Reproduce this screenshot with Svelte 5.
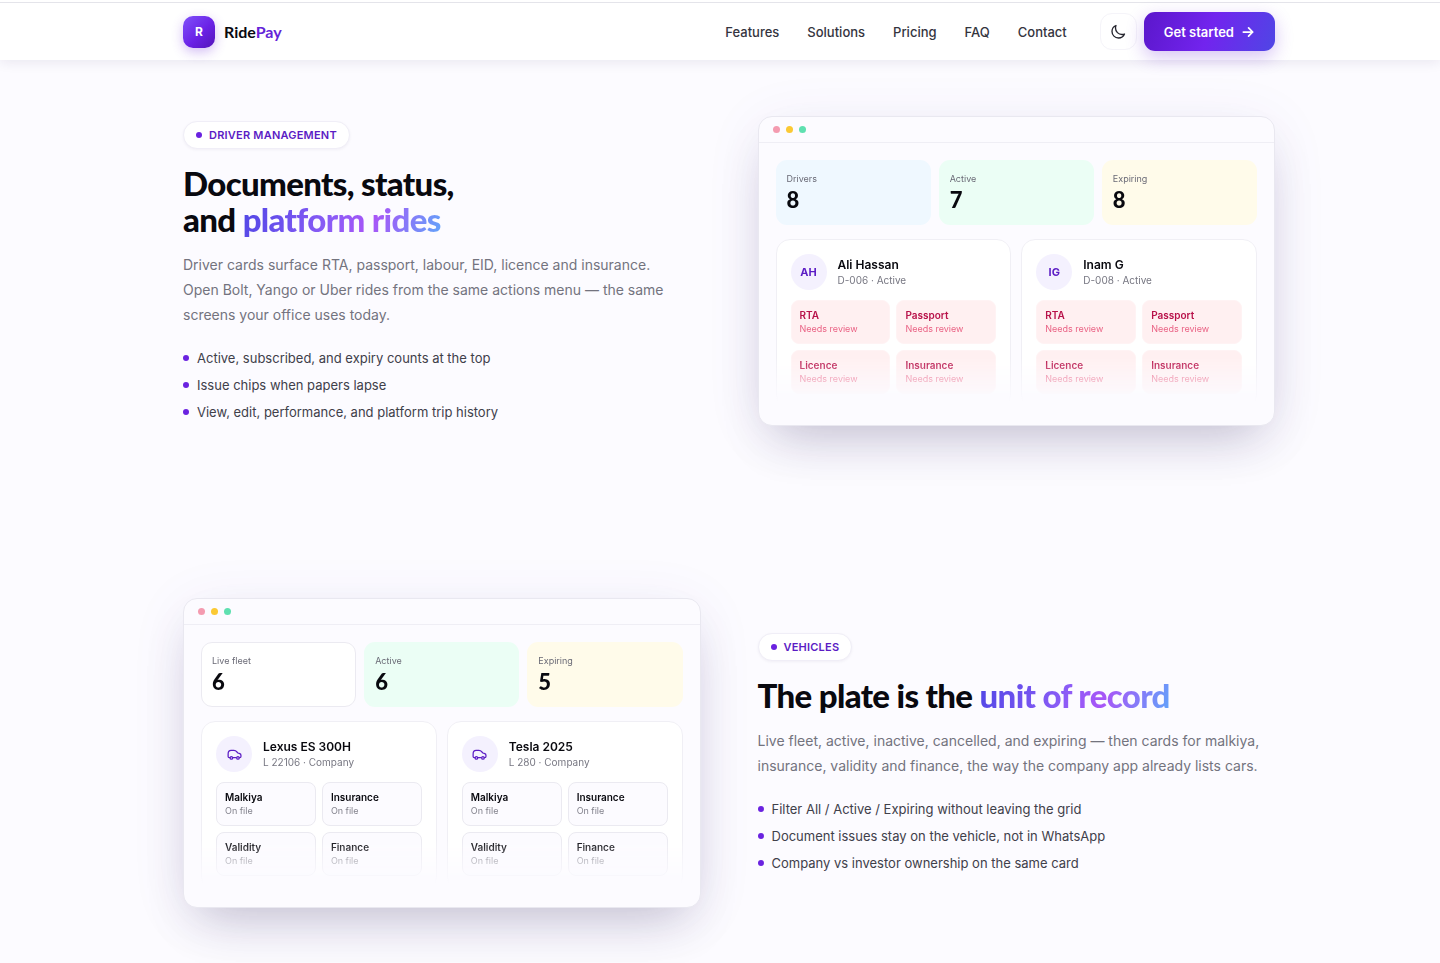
<script>
    const links = ["Features", "Solutions", "Pricing", "FAQ", "Contact"];

    const driverDocs = ["RTA", "Passport", "Licence", "Insurance"];
    const vehicleDocs = ["Malkiya", "Insurance", "Validity", "Finance"];

    const sections = [
        {
            id: "drivers",
            label: "Driver management",
            title: ["Documents, status,", "and "],
            accent: "platform rides",
            text: "Driver cards surface RTA, passport, labour, EID, licence and insurance. Open Bolt, Yango or Uber rides from the same actions menu — the same screens your office uses today.",
            points: [
                "Active, subscribed, and expiry counts at the top",
                "Issue chips when papers lapse",
                "View, edit, performance, and platform trip history",
            ],
            stats: [
                { name: "Drivers", value: 8, tone: "sky" },
                { name: "Active", value: 7, tone: "green" },
                { name: "Expiring", value: 8, tone: "amber" },
            ],
            cards: [
                { initials: "AH", name: "Ali Hassan", info: "D-006 · Active" },
                { initials: "IG", name: "Inam G", info: "D-008 · Active" },
            ],
            docs: driverDocs,
            docStatus: "Needs review",
            issue: true,
            reverse: false,
        },
        {
            id: "vehicles",
            label: "Vehicles",
            title: ["The plate is the "],
            accent: "unit of record",
            text: "Live fleet, active, inactive, cancelled, and expiring — then cards for malkiya, insurance, validity and finance, the way the company app already lists cars.",
            points: [
                "Filter All / Active / Expiring without leaving the grid",
                "Document issues stay on the vehicle, not in WhatsApp",
                "Company vs investor ownership on the same card",
            ],
            stats: [
                { name: "Live fleet", value: 6, tone: "plain" },
                { name: "Active", value: 6, tone: "green" },
                { name: "Expiring", value: 5, tone: "amber" },
            ],
            cards: [
                { name: "Lexus ES 300H", info: "L 22106 · Company" },
                { name: "Tesla 2025", info: "L 280 · Company" },
            ],
            docs: vehicleDocs,
            docStatus: "On file",
            issue: false,
            reverse: true,
        },
    ];
</script>

<header class="header">
    <div class="container header-row">
        <a class="brand" href="#top">
            <span class="brand-mark">R</span>
            <span class="brand-name">Ride<span>Pay</span></span>
        </a>
        <nav class="nav">
            {#each links as link}
                <a href="#{link.toLowerCase()}">{link}</a>
            {/each}
        </nav>
        <div class="actions">
            <button class="theme" aria-label="Toggle theme">
                <svg viewBox="0 0 24 24" width="16" height="16">
                    <path
                        d="M21.75 15A9.72 9.72 0 0 1 18 15.75C12.6 15.75 8.25 11.4 8.25 6c0-1.33.27-2.6.75-3.75A9.75 9.75 0 0 0 3 11.25C3 16.64 7.36 21 12.75 21a9.75 9.75 0 0 0 9-6Z"
                    />
                </svg>
            </button>
            <a class="cta" href="#start">
                Get started
                <svg viewBox="0 0 24 24" width="14" height="14">
                    <path d="M4 12h16M13 5l7 7-7 7" />
                </svg>
            </a>
        </div>
    </div>
</header>

<main class="container">
    {#each sections as section}
        <section class="feature" class:reverse={section.reverse} id={section.id}>
            <div class="copy">
                <span class="pill">{section.label}</span>
                <h2>
                    {#each section.title as line, i}
                        {#if i > 0}<br />{/if}{line}
                    {/each}
                    <span class="accent">{section.accent}</span>
                </h2>
                <p>{section.text}</p>
                <ul>
                    {#each section.points as point}
                        <li>{point}</li>
                    {/each}
                </ul>
            </div>

            <div class="preview">
                <div class="preview-bar">
                    <i class="dot rose"></i>
                    <i class="dot yellow"></i>
                    <i class="dot mint"></i>
                </div>
                <div class="preview-body">
                    <div class="stats">
                        {#each section.stats as stat}
                            <div class="stat {stat.tone}">
                                <span>{stat.name}</span>
                                <strong>{stat.value}</strong>
                            </div>
                        {/each}
                    </div>
                    <div class="cards">
                        {#each section.cards as card}
                            <article class="card">
                                <div class="card-head">
                                    <div class="avatar">
                                        {#if card.initials}
                                            {card.initials}
                                        {:else}
                                            <svg viewBox="0 0 24 24" width="15" height="15">
                                                <path
                                                    d="M5 17H3.6C2.400 17 1.800 16.300 1.800 15.200V11C1.800 7.500 3.400 5.500 6.500 5.500H11C13.200 5.500 14.600 6.400 16 8L17.500 9.600L20.500 10.600C21.800 11.100 22.300 12 22.300 13.200V15.200C22.300 16.400 21.600 17 20.500 17H19.500M9.500 17H15"
                                                />
                                                <circle cx="7" cy="17.500" r="2" />
                                                <circle cx="17.500" cy="17.500" r="2" />
                                            </svg>
                                        {/if}
                                    </div>
                                    <div>
                                        <h3>{card.name}</h3>
                                        <span class="info">{card.info}</span>
                                    </div>
                                </div>
                                <div class="docs">
                                    {#each section.docs as doc}
                                        <div class="doc" class:issue={section.issue}>
                                            <strong>{doc}</strong>
                                            <span>{section.docStatus}</span>
                                        </div>
                                    {/each}
                                </div>
                            </article>
                        {/each}
                    </div>
                </div>
            </div>
        </section>
    {/each}
</main>

<style>
    :global(body) {
        margin: 0;
        background: #fcfbff;
        color: #09090f;
        font-family: Inter, "Liberation Sans", sans-serif;
        overflow-x: hidden;
    }

    .container {
        box-sizing: border-box;
        width: 100%;
        max-width: 1158px;
        margin: 0 auto;
        padding: 0 24px 0 42px;
    }

    .header {
        position: relative;
        z-index: 1;
        padding-top: 2px;
        background: #fff;
        box-shadow: 0 2px 12px rgba(30, 20, 80, 0.09);
    }

    .header::before {
        content: "";
        display: block;
        height: 1px;
        background: #e4e4ea;
    }

    .header-row {
        display: flex;
        align-items: center;
        height: 57px;
    }

    .brand {
        display: flex;
        align-items: center;
        gap: 9px;
        margin-right: auto;
        color: inherit;
        text-decoration: none;
    }

    .brand-mark {
        display: grid;
        place-items: center;
        width: 32px;
        height: 32px;
        border-radius: 10px;
        background: linear-gradient(135deg, #8052fa, #6a22e6 55%, #5314b8);
        box-shadow: 0 4px 12px rgba(109, 40, 217, 0.3);
        color: #fff;
        font-size: 12px;
        font-weight: 700;
    }

    .brand-name {
        font-family: Lato, sans-serif;
        font-size: 16px;
        font-weight: 700;
    }

    .brand-name span {
        color: #6424d8;
    }

    .nav {
        display: flex;
        gap: 28px;
        margin-right: 33px;
    }

    .nav a {
        color: #34343e;
        font-size: 13px;
        font-weight: 500;
        text-decoration: none;
    }

    .actions {
        display: flex;
        align-items: center;
        gap: 7px;
    }

    .theme {
        display: grid;
        place-items: center;
        width: 37px;
        height: 37px;
        padding: 0;
        border: 1px solid #f5f4f9;
        border-radius: 12px;
        background: #fff;
        cursor: pointer;
    }

    .theme svg,
    .cta svg {
        fill: none;
        stroke: #25252e;
        stroke-width: 2;
        stroke-linecap: round;
        stroke-linejoin: round;
    }

    .cta {
        display: flex;
        align-items: center;
        justify-content: center;
        gap: 7px;
        box-sizing: border-box;
        height: 39px;
        padding: 0 20px;
        border-radius: 11px;
        background: linear-gradient(110deg, #5b17cb, #7224ee 50%, #4f46e5);
        box-shadow: 0 6px 18px rgba(109, 40, 217, 0.28);
        color: #fff;
        font-size: 13px;
        font-weight: 600;
        text-decoration: none;
    }

    .cta svg {
        stroke: #fff;
        stroke-width: 3;
    }

    .feature {
        display: grid;
        grid-template-columns: 1fr 1fr;
        align-items: center;
        gap: 57px;
        padding: 56px 0 116px;
    }

    .reverse .copy {
        order: 1;
    }

    .pill {
        display: flex;
        align-items: center;
        gap: 7px;
        box-sizing: border-box;
        width: fit-content;
        height: 28px;
        padding: 0 12px;
        border: 1px solid #f0eef7;
        border-radius: 14px;
        background: #fff;
        box-shadow: 0 1px 3px rgba(30, 20, 80, 0.05);
        color: #5b1cc4;
        font-size: 11px;
        font-weight: 600;
        letter-spacing: 0.02em;
        text-transform: uppercase;
    }

    .pill::before {
        content: "";
        width: 6px;
        height: 6px;
        border-radius: 50%;
        background: #6a22e0;
    }

    h2 {
        margin: 16px 0 15px;
        font-family: Lato, sans-serif;
        font-size: 33px;
        font-weight: 900;
        line-height: 36px;
        letter-spacing: -0.02em;
    }

    .accent {
        background: linear-gradient(110deg, #4f46e5, #8b5cf6 45%, #a855f7 65%, #60a5fa);
        background-clip: text;
        color: transparent;
    }

    p {
        max-width: 504px;
        margin: 0;
        color: #73737e;
        font-size: 14px;
        line-height: 25px;
    }

    ul {
        display: grid;
        gap: 7px;
        margin: 21px 0 0;
        padding: 0;
        list-style: none;
    }

    li {
        display: flex;
        align-items: center;
        gap: 8px;
        color: #40404a;
        font-size: 13px;
        line-height: 20px;
    }

    li::before {
        content: "";
        width: 6px;
        height: 6px;
        border-radius: 50%;
        background: #6a22e0;
    }

    .preview {
        overflow: hidden;
        border: 1px solid #e9e8f0;
        border-radius: 14px;
        background: #fcfbff;
        box-shadow:
            0 24px 48px -16px rgba(25, 15, 60, 0.24),
            0 8px 60px rgba(80, 60, 180, 0.07);
    }

    .preview-bar {
        display: flex;
        align-items: center;
        gap: 6px;
        height: 25px;
        padding: 0 14px;
        border-bottom: 1px solid #efeef5;
    }

    .dot {
        width: 7px;
        height: 7px;
        border-radius: 50%;
    }

    .rose {
        background: #f49bb0;
    }

    .yellow {
        background: #fbc934;
    }

    .mint {
        background: #5fe0b0;
    }

    .preview-body {
        padding: 17px 17px 16px;
        mask-image: linear-gradient(#000 76%, transparent 92%);
    }

    .stats {
        display: grid;
        grid-template-columns: repeat(3, 1fr);
        gap: 8px;
    }

    .stat {
        display: grid;
        gap: 2px;
        padding: 10px 10px 12px;
        border: 1px solid transparent;
        border-radius: 11px;
    }

    .stat span {
        color: #6a6a76;
        font-size: 9px;
        line-height: 15px;
    }

    .stat strong {
        font-family: Lato, sans-serif;
        font-size: 22px;
        font-weight: 900;
        line-height: 24px;
    }

    .sky {
        background: #eff8ff;
    }

    .green {
        background: #ebfef5;
    }

    .amber {
        background: #fffbea;
    }

    .plain {
        border-color: #ebeaf1;
        background: #fff;
    }

    .cards {
        display: grid;
        grid-template-columns: 1fr 1fr;
        gap: 10px;
        margin-top: 14px;
    }

    .card {
        padding: 14px;
        border: 1px solid #f0eff5;
        border-radius: 14px;
        background: #fff;
    }

    .card-head {
        display: flex;
        align-items: center;
        gap: 11px;
    }

    .avatar {
        display: grid;
        place-items: center;
        width: 36px;
        height: 36px;
        border-radius: 50%;
        background: #f4f1fe;
        color: #5b1cc4;
        font-size: 11px;
        font-weight: 700;
    }

    .avatar svg {
        fill: none;
        stroke: #5b1cc4;
        stroke-width: 2;
        stroke-linecap: round;
        stroke-linejoin: round;
    }

    .avatar circle {
        fill: #f4f1fe;
    }

    h3 {
        margin: 0;
        font-size: 12px;
        font-weight: 600;
        line-height: 16px;
    }

    .info {
        display: block;
        color: #777782;
        font-size: 10px;
        line-height: 15px;
    }

    .docs {
        display: grid;
        grid-template-columns: 1fr 1fr;
        gap: 6px;
        margin-top: 10px;
    }

    .doc {
        display: grid;
        padding: 7px 8px;
        border: 1px solid #ebeaf1;
        border-radius: 8px;
        background: #fcfbff;
    }

    .doc strong {
        font-size: 10px;
        font-weight: 600;
        line-height: 14px;
    }

    .doc span {
        color: #83838d;
        font-size: 9px;
        line-height: 14px;
    }

    .issue {
        border-color: #fff3f4;
        background: #fff0f1;
        color: #b8124a;
    }

    .issue span {
        color: #ea6385;
    }

    @media (max-width: 860px) {
        .container {
            padding: 0 24px;
        }

        .nav {
            display: none;
        }

        .feature {
            grid-template-columns: 1fr;
        }

        .reverse .copy {
            order: 0;
        }
    }
</style>
